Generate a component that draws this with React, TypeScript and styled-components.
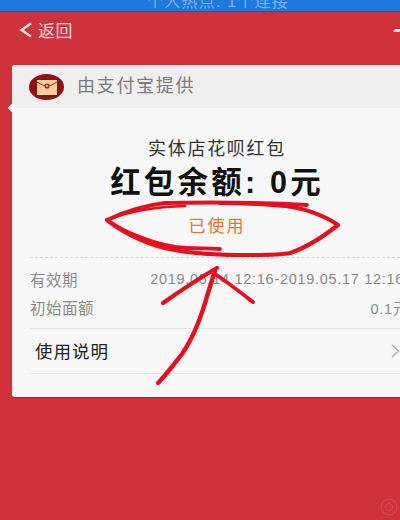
import styled, { createGlobalStyle } from 'styled-components';

const Global = createGlobalStyle`
    html, body {
        margin: 0;
        padding: 0;
        background: #cf323b;
    }
    body {
        font-family: "Liberation Sans", "Noto Sans CJK SC", sans-serif;
    }
`
const Page = styled.div`
    position: relative;
    width: 400px;
    height: 520px;
    overflow: hidden;
    background: #cf323b;
`
const StatusBar = styled.div`
    height: 11px;
    background: #1e79d9;
    display: flex;
    justify-content: center;
    align-items: flex-end;
    overflow: hidden;
    box-shadow: 0 1px 1px rgba(90, 60, 110, 0.6);
`
const StatusText = styled.span`
    font-size: 16px;
    line-height: 16px;
    letter-spacing: 1.2px;
    color: #7fb4ea;
    margin-left: 36px;
    margin-bottom: 1px;
    white-space: nowrap;
`
const NavBar = styled.div`
    height: 37px;
    padding: 0 0 0 18px;
    display: flex;
    align-items: center;
    gap: 5px;
    position: relative;
`
const BackLabel = styled.span`
    font-size: 17px;
    letter-spacing: 0.6px;
    color: #f8dcdc;
`
const NavMark = styled.div`
    position: absolute;
    right: 0;
    top: 18px;
    width: 6px;
    height: 3px;
    background: #fbeeee;
    transform: skewX(-30deg);
`
const Card = styled.div`
    margin: 17px -40px 0 12px;
    height: 332px;
    border-radius: 3px;
    background: #f7f7f7;
    position: relative;
    box-shadow: 0 1px 1px rgba(120, 20, 30, 0.4);
`
const CardHeader = styled.div`
    height: 43px;
    background: #efefef;
    border-radius: 3px 3px 0 0;
    padding-left: 17px;
    display: flex;
    align-items: center;
    gap: 13px;
`
const Notch = styled.div`
    position: absolute;
    left: -3px;
    top: 40px;
    width: 6px;
    height: 6px;
    background: #f7f7f7;
    transform: rotate(45deg);
`
const Provider = styled.span`
    font-size: 18px;
    line-height: 20px;
    margin-top: -2px;
    letter-spacing: 1.7px;
    color: #7c7c7c;
`
const Summary = styled.div`
    display: flex;
    flex-direction: column;
    align-items: center;
    width: 410px;
`
const Title = styled.div`
    margin-top: 31px;
    font-size: 18px;
    line-height: 20px;
    letter-spacing: 1.7px;
    color: #333;
`
const Balance = styled.div`
    margin-top: 7px;
    font-size: 30.5px;
    line-height: 32px;
    font-weight: 700;
    letter-spacing: 3.2px;
    color: #111;
`
const Status = styled.div`
    margin-top: 19px;
    font-size: 17px;
    line-height: 20px;
    letter-spacing: 2px;
    color: #e0772f;
`
const Details = styled.div`
    margin: 20px 40px 0 18px;
    border-top: 1px dashed #dcdcdc;
    padding-top: 7px;
`
const DetailRow = styled.div`
    display: flex;
    justify-content: space-between;
    align-items: center;
    height: 28px;
    font-size: 15.5px;
    letter-spacing: 0.5px;
    color: #8b8b8b;
    white-space: nowrap;
`
const DetailValue = styled.span<{ $overhang: number }>`
    font-size: 14.5px;
    letter-spacing: 0.7px;
    margin-right: ${p => -p.$overhang}px;
`
const LinkRow = styled.div`
    margin: 7px 40px 0 18px;
    height: 43px;
    border-top: 1px solid #e4e4e4;
    border-bottom: 1px solid #e4e4e4;
    padding-left: 5px;
    padding-bottom: 1px;
    box-sizing: content-box;
    display: flex;
    align-items: center;
    justify-content: space-between;
    font-size: 17.5px;
    letter-spacing: 1px;
    color: #222;
`
const Annotation = styled.svg`
    position: absolute;
    left: 0;
    top: 0;
    pointer-events: none;
`
const Watermark = styled.svg`
    position: absolute;
    right: 0;
    bottom: 2px;
    opacity: 0.35;
`

function App() {
    return (
        <Page>
            <Global />
            <StatusBar>
                <StatusText>个人热点: 1个连接</StatusText>
            </StatusBar>
            <NavBar>
                <svg width="15" height="16" viewBox="0 0 15 16">
                    <path d="M13 1.5 L3.5 8 L13 14.5" fill="none" stroke="#f8e4e4" strokeWidth="2.4" />
                </svg>
                <BackLabel>返回</BackLabel>
                <NavMark />
            </NavBar>
            <Card>
                <Notch />
                <CardHeader>
                    <svg width="35" height="26" viewBox="0 0 35 26">
                        <ellipse cx="17.5" cy="13" rx="17.5" ry="13" fill="#8e1210" />
                        <rect x="8" y="6" width="20" height="15" fill="#f8cf9d" />
                        <path d="M8 8 Q14 12 18 12 Q22 12 28 8" fill="none" stroke="#a8302a" strokeWidth="1" />
                        <circle cx="18" cy="12" r="2.6" fill="#b5231f" />
                        <circle cx="18" cy="12" r="0.9" fill="#fbe3c8" />
                    </svg>
                    <Provider>由支付宝提供</Provider>
                </CardHeader>
                <Summary>
                    <Title>实体店花呗红包</Title>
                    <Balance>红包余额: 0元</Balance>
                    <Status>已使用</Status>
                </Summary>
                <Details>
                    <DetailRow>
                        <span>有效期</span>
                        <DetailValue $overhang={4}>2019.05.14 12:16-2019.05.17 12:16</DetailValue>
                    </DetailRow>
                    <DetailRow>
                        <span>初始面额</span>
                        <DetailValue $overhang={8}>0.1元</DetailValue>
                    </DetailRow>
                </Details>
                <LinkRow>
                    <span>使用说明</span>
                    <svg width="9" height="14" viewBox="0 0 9 14">
                        <path d="M1 1 L7.5 7 L1 13" fill="none" stroke="#a9a9a9" strokeWidth="1.3" />
                    </svg>
                </LinkRow>
            </Card>
            <Annotation width="400" height="520" viewBox="0 0 400 520">
                <g fill="none" stroke="#e60f1e" strokeLinecap="round" strokeLinejoin="round">
                    <path d="M307 205 C270 203 210 202 165 203 C140 206 122 213 107 220 C122 231 150 243 175 247 C190 249 205 248 220 249" strokeWidth="3.8" />
                    <path d="M107 220 C125 213 150 207 185 206" strokeWidth="2.6" />
                    <path d="M107 220 C125 234 150 246 175 250 C195 254 225 255 250 255 C265 255 280 255 290 253 C308 247 324 236 338 225 C325 216 305 208 285 206 C265 204 240 203 220 203" strokeWidth="4.2" />
                    <path d="M163 303 C180 291 198 279 217 268" strokeWidth="4.2" />
                    <path d="M212 272 C226 281 240 292 253 302" strokeWidth="3.8" />
                    <path d="M215 271 C209 288 205 306 198 323 C193 336 188 345 182 354 C174 364 166 375 158 383" strokeWidth="4.4" />
                </g>
            </Annotation>
            <Watermark width="22" height="22" viewBox="0 0 22 22">
                <circle cx="11" cy="11" r="8" fill="none" stroke="#e88a8f" strokeWidth="1" />
                <circle cx="11" cy="11" r="3.5" fill="none" stroke="#e88a8f" strokeWidth="1" />
            </Watermark>
        </Page>
    )
}

export default App
